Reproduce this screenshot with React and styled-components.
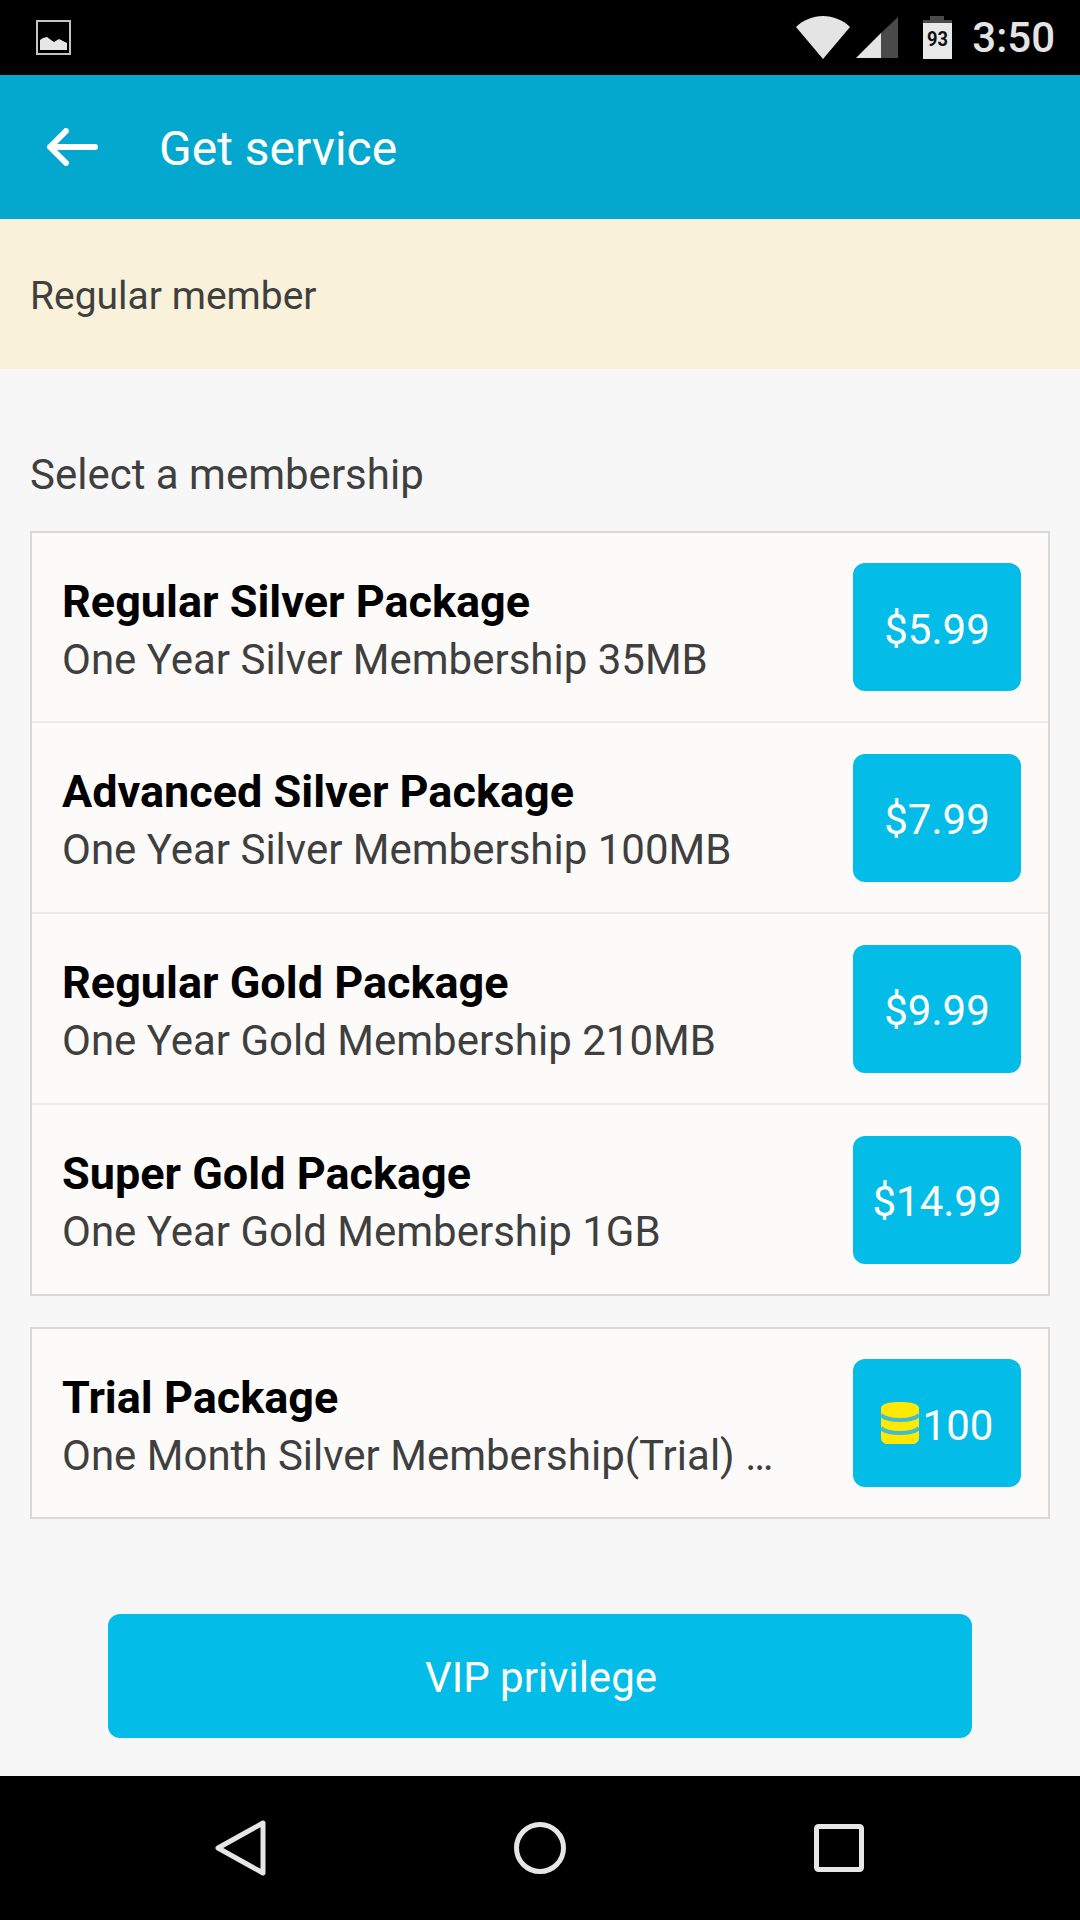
import React from "react";
import styled, { createGlobalStyle } from "styled-components";

const GlobalStyle = createGlobalStyle`
  html, body { margin: 0; padding: 0; background: #000; }
  body { font-family: Roboto, "Noto Sans", sans-serif; }
  * { box-sizing: border-box; }
`;

const Screen = styled.div`
  width: 1080px;
  height: 1920px;
  display: flex;
  flex-direction: column;
  background: #f7f7f7;
`;

const StatusBar = styled.div`
  height: 75px;
  background: #000;
  display: flex;
  align-items: center;
  padding: 0 25px 0 36px;
  color: #e4e4e4;
`;

const StatusIcons = styled.div`
  margin-left: auto;
  display: flex;
  align-items: center;
`;

const Clock = styled.span`
  font-size: 42px;
  font-weight: 500;
  margin-left: 20px;
  line-height: 1;
  margin-top: 1px;
`;

const Toolbar = styled.div`
  height: 144px;
  background: #04a8ce;
  display: flex;
  align-items: center;
  padding-left: 46px;
  color: #fff;
`;

const Title = styled.div`
  font-size: 48px;
  margin-left: 61px;
  padding-top: 2px;
`;

const Banner = styled.div`
  height: 150px;
  background: #f9f1d9;
  display: flex;
  align-items: center;
  padding: 3px 0 0 30px;
  font-size: 39px;
  color: #3f3f3f;
`;

const Content = styled.div`
  flex: 1;
  padding: 0 30px;
  display: flex;
  flex-direction: column;
`;

const SectionLabel = styled.div`
  font-size: 42px;
  color: #3f3f3f;
  height: 162px;
  padding-top: 83px;
  line-height: 46px;
`;

const Card = styled.div`
  border: 2px solid #d9d9d9;
  background: #fcfbf9;
  margin-bottom: ${(p) => p.$gap || 0}px;
`;

const Row = styled.div`
  height: 188px;
  padding: 0 27px 0 30px;
  display: flex;
  align-items: center;
  & + & {
    height: 191px;
    border-top: 2px solid #ebebeb;
  }
`;

const Info = styled.div`
  flex: 1;
  min-width: 0;
  padding-top: 7px;
`;

const Name = styled.div`
  font-size: 45px;
  font-weight: 700;
  color: #000;
  line-height: 58px;
`;

const Desc = styled.div`
  font-size: 42px;
  color: #3f3f3f;
  line-height: 58px;
  white-space: nowrap;
`;

const Price = styled.div`
  width: 168px;
  height: 128px;
  border-radius: 12px;
  background: #03bde8;
  color: #fff;
  font-size: 42px;
  padding-top: 4px;
  display: flex;
  align-items: center;
  justify-content: center;
`;

const Footer = styled.div`
  flex: 1;
  display: flex;
  justify-content: center;
  padding: 95px 48px 0;
`;

const VipButton = styled.div`
  width: 864px;
  height: 124px;
  border-radius: 12px;
  background: #03bde8;
  color: #fff;
  font-size: 42px;
  padding: 3px 0 0 2px;
  display: flex;
  align-items: center;
  justify-content: center;
`;

const NavBar = styled.div`
  height: 144px;
  background: #000;
  display: flex;
  align-items: center;
  padding-left: 215px;
  gap: 248px;
`;

const ImageNote = () => (
  <svg width="36" height="36" viewBox="0 0 36 36">
    <rect x="1" y="1" width="33" height="33" fill="none" stroke="#c4c4c4" strokeWidth="2" />
    <path d="M4 30V20l3-2 4-1 4 3 3 2 5-3 4 2 4 2v7z" fill="#e6e6e6" />
  </svg>
);

const Wifi = () => (
  <svg width="54" height="43" viewBox="0 0 54 43">
    <path d="M0 11C7 4 17 0 27 0s20 4 27 11L27 43z" fill="#e4e4e4" />
  </svg>
);

const Signal = () => (
  <svg width="42" height="42" viewBox="0 0 42 42" style={{ marginLeft: 6 }}>
    <path d="M0 41L25 16v25z" fill="#e4e4e4" />
    <path d="M25 16L42 0v41H25z" fill="#4a4a4a" />
  </svg>
);

const Battery = () => (
  <svg width="29" height="43" viewBox="0 0 29 43" style={{ marginLeft: 25 }}>
    <path d="M7 0h14v4h8v3H0V4h7z" fill="#4a4a4a" />
    <rect y="7" width="29" height="36" fill="#e8e8e8" />
    <text x="14.5" y="30" fontFamily="Roboto" fontWeight="700" fontSize="21" textAnchor="middle" textLength="21" lengthAdjust="spacingAndGlyphs" fill="#111">93</text>
  </svg>
);

const BackArrow = () => (
  <svg width="52" height="38" viewBox="0 0 52 38" fill="none" stroke="#fff" strokeWidth="6" strokeLinecap="round" strokeLinejoin="round">
    <path d="M49 19H4M20 3L4 19l16 16" />
  </svg>
);

const Coins = () => (
  <svg width="38" height="42" viewBox="0 0 38 42" style={{ margin: "-4px 4px 0 0" }}>
    <path d="M0 6C0 2 8 0 19 0s19 2 19 6v30c0 4-4 6-6 6H6c-2 0-6-2-6-6z" fill="#fee900" />
    <path d="M0 13c4 4 12 5 19 5s15-1 19-5M0 26c4 4 12 5 19 5s15-1 19-5" fill="none" stroke="#45bccb" strokeWidth="4" />
  </svg>
);

const BackNav = () => (
  <svg width="51" height="56" viewBox="0 0 51 56" fill="none" stroke="#e6e6e6" strokeWidth="5" strokeLinejoin="round">
    <path d="M48 3L3 28l45 25z" />
  </svg>
);

const HomeNav = () => (
  <svg width="52" height="52" viewBox="0 0 52 52" fill="none" stroke="#e6e6e6" strokeWidth="5">
    <circle cx="26" cy="26" r="23.5" />
  </svg>
);

const RecentNav = () => (
  <svg width="50" height="48" viewBox="0 0 50 48" fill="none" stroke="#e6e6e6" strokeWidth="5" strokeLinejoin="round">
    <rect x="2.5" y="2.5" width="45" height="43" rx="2" />
  </svg>
);

const packages = [
  { name: "Regular Silver Package", desc: "One Year Silver Membership 35MB", price: "$5.99" },
  { name: "Advanced Silver Package", desc: "One Year Silver Membership 100MB", price: "$7.99" },
  { name: "Regular Gold Package", desc: "One Year Gold Membership 210MB", price: "$9.99" },
  { name: "Super Gold Package", desc: "One Year Gold Membership 1GB", price: "$14.99" },
];

const App = () => {
  return (
    <Screen>
      <GlobalStyle />
      <StatusBar>
        <ImageNote />
        <StatusIcons>
          <Wifi />
          <Signal />
          <Battery />
          <Clock>3:50</Clock>
        </StatusIcons>
      </StatusBar>
      <Toolbar>
        <BackArrow />
        <Title>Get service</Title>
      </Toolbar>
      <Banner>Regular member</Banner>
      <Content>
        <SectionLabel>Select a membership</SectionLabel>
        <Card $gap={31}>
          {packages.map((p) => (
            <Row key={p.name}>
              <Info>
                <Name>{p.name}</Name>
                <Desc>{p.desc}</Desc>
              </Info>
              <Price>{p.price}</Price>
            </Row>
          ))}
        </Card>
        <Card>
          <Row>
            <Info>
              <Name>Trial Package</Name>
              <Desc>One Month Silver Membership(Trial) …</Desc>
            </Info>
            <Price>
              <Coins />
              100
            </Price>
          </Row>
        </Card>
        <Footer>
          <VipButton>VIP privilege</VipButton>
        </Footer>
      </Content>
      <NavBar>
        <BackNav />
        <HomeNav />
        <RecentNav />
      </NavBar>
    </Screen>
  );
};

export default App;
